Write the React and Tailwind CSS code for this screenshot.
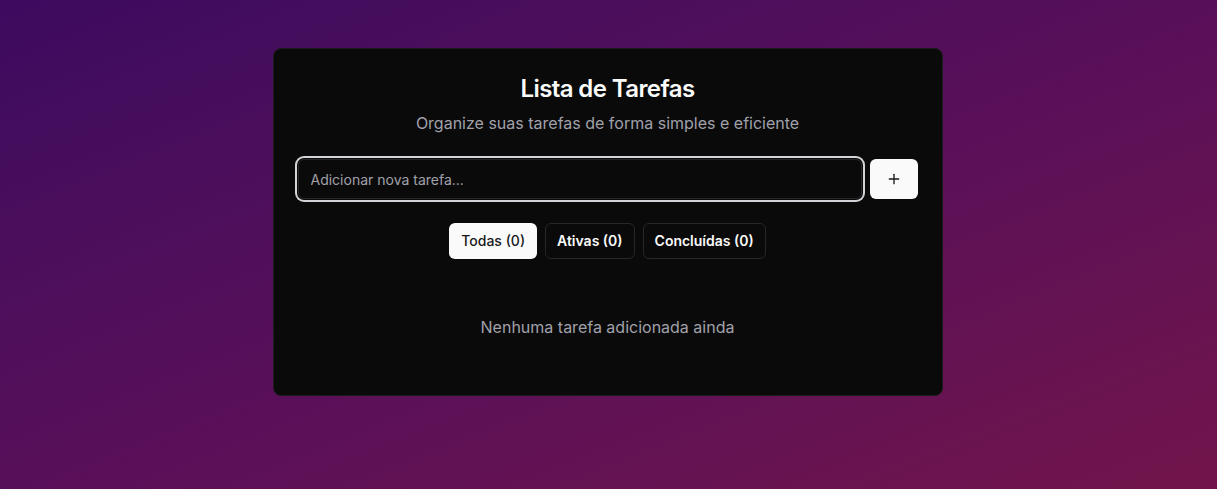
import React, { useState } from 'react';
import { Plus } from 'lucide-react';

const filters = [
  { key: 'all', label: 'Todas' },
  { key: 'active', label: 'Ativas' },
  { key: 'done', label: 'Concluídas' },
];

const App = () => {
  const [tasks, setTasks] = useState([]);
  const [text, setText] = useState('');
  const [filter, setFilter] = useState('all');

  const counts = {
    all: tasks.length,
    active: tasks.filter((t) => !t.done).length,
    done: tasks.filter((t) => t.done).length,
  };

  const addTask = () => {
    if (!text.trim()) return;
    setTasks([...tasks, { id: Date.now(), title: text.trim(), done: false }]);
    setText('');
  };

  return (
    <div
      className="min-h-screen bg-gradient-to-br from-[#3d0a5f] via-[#580f59] to-[#72144b] py-12"
      style={{ fontFamily: 'Inter, "Noto Sans", sans-serif' }}
    >
      <div className="mx-auto w-[670px] -translate-x-px rounded-lg border border-[#1c1c1c] bg-[#0a0a0a] text-[#fafafa]">
        <div className="flex flex-col items-center space-y-1.5 p-6">
          <h1 className="text-2xl font-semibold tracking-tight">Lista de Tarefas</h1>
          <p className="text-base text-[#a1a1aa]">Organize suas tarefas de forma simples e eficiente</p>
        </div>
        <div className="space-y-6 px-6 pb-6">
          <div className="flex gap-2">
            <input
              value={text}
              onChange={(e) => setText(e.target.value)}
              onKeyDown={(e) => e.key === 'Enter' && addTask()}
              placeholder="Adicionar nova tarefa..."
              className="h-10 flex-1 rounded-md border border-[#27272a] bg-[#0a0a0a] px-3 text-sm text-[#fafafa] outline-none ring-2 ring-[#d4d4d8] ring-offset-1 ring-offset-[#0a0a0a] placeholder:text-[#a1a1aa]"
            />
            <button
              onClick={addTask}
              className="flex h-10 w-12 items-center justify-center rounded-md bg-[#fafafa] text-[#18181b]"
            >
              <Plus size={16} strokeWidth={2} />
            </button>
          </div>

          <div className="flex justify-center gap-2">
            {filters.map((f) => (
              <button
                key={f.key}
                onClick={() => setFilter(f.key)}
                className={
                  filter === f.key
                    ? 'h-9 rounded-md bg-[#fafafa] px-3 text-sm font-medium text-[#18181b]'
                    : 'h-9 rounded-md border border-[#27272a] bg-[#0a0a0a] px-[11px] text-sm font-semibold text-[#fafafa]'
                }
              >
                {f.label} ({counts[f.key]})
              </button>
            ))}
          </div>

          <div className="py-8 text-center text-base text-[#a1a1aa]">Nenhuma tarefa adicionada ainda</div>
        </div>
      </div>
    </div>
  );
};

export default App;
